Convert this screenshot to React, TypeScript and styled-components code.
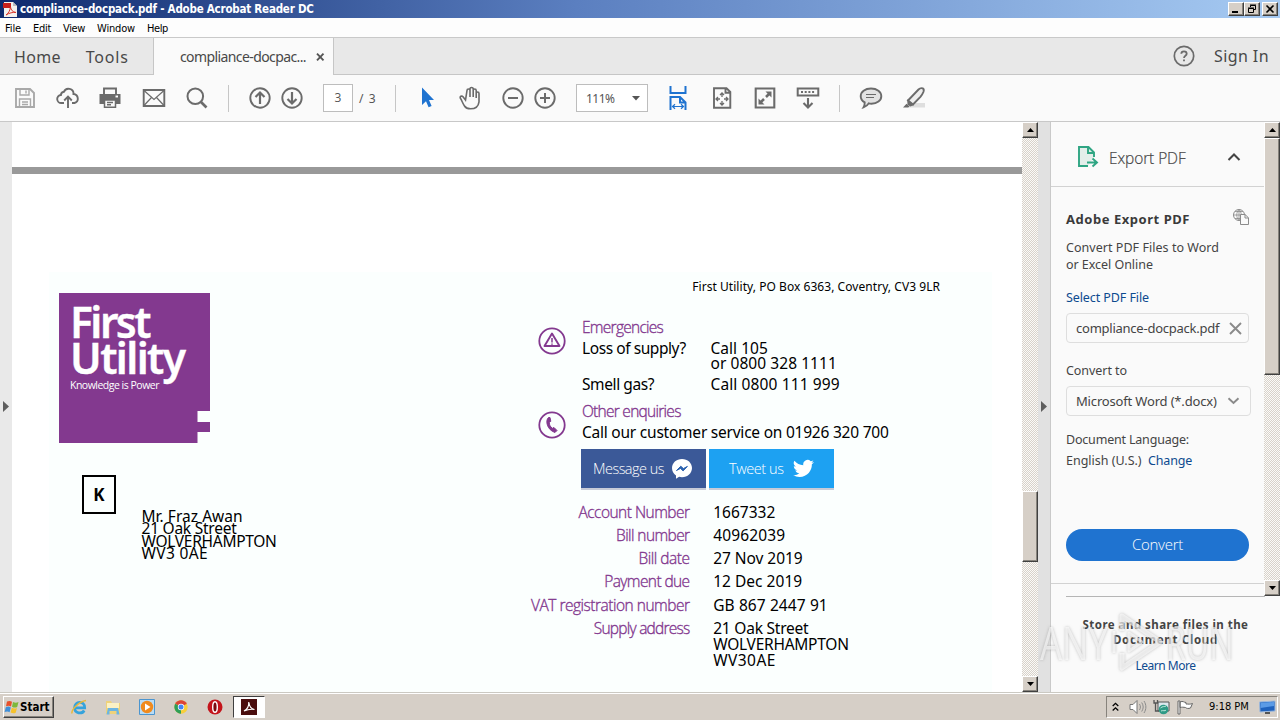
import React from 'react'
import styled, { createGlobalStyle, css } from 'styled-components'

const PURPLE = '#83398f'
const FACE = '#d6cfc7'
const ICON = '#6b6b6b'
const BLUE = '#1f73d0'

type Line = { text: string; track?: number }

const BILL_ROWS: { label: Line; value: Line[] }[] = [
  { label: { text: 'Account Number', track: -0.53 }, value: [{ text: '1667332' }] },
  { label: { text: 'Bill number', track: -0.6 }, value: [{ text: '40962039', track: 0.13 }] },
  { label: { text: 'Bill date', track: -0.48 }, value: [{ text: '27 Nov 2019', track: -0.05 }] },
  { label: { text: 'Payment due', track: -0.6 }, value: [{ text: '12 Dec 2019', track: 0.02 }] },
  { label: { text: 'VAT registration number', track: -0.5 }, value: [{ text: 'GB 867 2447 91', track: 0.1 }] },
  {
    label: { text: 'Supply address', track: -0.76 },
    value: [
      { text: '21 Oak Street', track: -0.22 },
      { text: 'WOLVERHAMPTON', track: -0.25 },
      { text: 'WV30AE', track: 0.45 },
    ],
  },
]

const ADDRESS: Line[] = [
  { text: 'Mr. Fraz Awan', track: 0.04 },
  { text: '21 Oak Street', track: -0.24 },
  { text: 'WOLVERHAMPTON', track: -0.28 },
  { text: 'WV3 0AE', track: 0.35 },
]

const MENUS: Line[] = [
  { text: 'File', track: -0.12 },
  { text: 'Edit', track: -0.29 },
  { text: 'View', track: -0.37 },
  { text: 'Window', track: -0.17 },
  { text: 'Help', track: -0.39 },
]

const GlobalStyle = createGlobalStyle`
  * {
    box-sizing: border-box;
  }
  body {
    margin: 0;
    overflow: hidden;
    font-family: 'Noto Sans', 'Open Sans', sans-serif;
  }
  svg {
    display: block;
    flex: none;
  }
`

const Screen = styled.div`
  width: 1280px;
  height: 720px;
  display: flex;
  flex-direction: column;
  background: #fafafa;
  overflow: hidden;
  white-space: nowrap;
`

const Txt = styled.span<{ $track?: number }>`
  letter-spacing: ${p => p.$track || 0}px;
  white-space: pre;
`

const TitleBar = styled.header`
  height: 18px;
  display: flex;
  align-items: center;
  padding: 0 2px 0 3px;
  background: linear-gradient(90deg, #0f2a6e 0%, #5b7fc0 45%, #a6caf2 100%);
  color: #fff;
  font: 700 11.5px/18px 'DejaVu Sans Condensed', 'DejaVu Sans', sans-serif;
`

const TitleText = styled.div`
  flex: 1;
  padding-left: 2px;
`

const raised = css`
  background: ${FACE};
  border: 1px solid;
  border-color: #fff #404040 #404040 #fff;
  box-shadow: inset -1px -1px 0 #87837c;
`

const WindowButton = styled.div<{ $gap?: number }>`
  ${raised};
  width: 16px;
  height: 14px;
  margin-left: ${p => p.$gap || 0}px;
  display: flex;
  align-items: center;
  justify-content: center;
`

const MenuBar = styled.nav`
  height: 20px;
  display: flex;
  gap: 12px;
  padding-left: 5px;
  background: #fdfdfd;
  border-bottom: 1px solid #c9c9c9;
  font: 11px/21px 'DejaVu Sans Condensed', 'DejaVu Sans', sans-serif;
  color: #000;
`

const TabBar = styled.div`
  height: 37px;
  display: flex;
  align-items: stretch;
  background: #e8e8e8;
  color: #484848;
  font-size: 16px;
  line-height: 38px;
`

const NavTabs = styled.div`
  width: 154px;
  padding-left: 14px;
  display: flex;
  gap: 25px;
  border-right: 1px solid #c6c6c6;
  border-bottom: 1px solid #c6c6c6;
`

const ActiveTab = styled.div`
  width: 179px;
  padding: 0 7px 0 26px;
  display: flex;
  align-items: center;
  justify-content: space-between;
  background: #fafafa;
  font-size: 14px;
`

const Account = styled.div`
  flex: 1;
  padding-right: 11px;
  display: flex;
  align-items: center;
  justify-content: flex-end;
  gap: 19px;
  border-left: 1px solid #c6c6c6;
  border-bottom: 1px solid #c6c6c6;
`

const Toolbar = styled.div`
  height: 47px;
  display: flex;
  align-items: center;
  background: #fafafa;
  border-bottom: 1px solid #c8c8c8;
`

const Tool = styled.div<{ $gap: number }>`
  width: 24px;
  height: 24px;
  margin-left: ${p => p.$gap}px;
`

const Divider = styled.div<{ $gap: number }>`
  width: 1px;
  height: 27px;
  margin-left: ${p => p.$gap}px;
  background: #c6c6c6;
`

const PageInput = styled.div`
  width: 30px;
  height: 28px;
  margin-left: 19px;
  border: 1px solid #bdbdbd;
  background: #fff;
  color: #555;
  font: 12px/26px 'Open Sans', sans-serif;
  text-align: center;
`

const PageCount = styled.div`
  width: 18px;
  margin: 0 18px 0 6px;
  color: #555;
  font-size: 12px;
`

const ZoomSelect = styled.div`
  width: 72px;
  height: 28px;
  margin-left: 19px;
  padding: 0 7px 0 9px;
  display: flex;
  align-items: center;
  justify-content: space-between;
  border: 1px solid #bdbdbd;
  background: #fff;
  color: #555;
  font-size: 12px;
`

const Workspace = styled.main`
  height: 570px;
  display: flex;
`

const Gutter = styled.div<{ $color: string }>`
  width: 12px;
  padding: 0 0 2px 3px;
  display: flex;
  align-items: center;
  background: ${p => p.$color};
`

const Viewer = styled.div`
  width: 1010px;
  display: flex;
  flex-direction: column;
  background: #fff;
`

const PageGap = styled.div`
  height: 7px;
  margin-top: 45px;
  background: #999;
`

const Bill = styled.article`
  flex: 1;
  margin: 98px 30px 0 37px;
  display: flex;
  background: #fbfffe;
  color: #000;
  font-size: 15.5px;
`

const BillLeft = styled.div`
  width: 481px;
  padding: 21px 0 0 10px;
`

const Logo = styled.div`
  width: 151px;
  height: 150px;
  padding: 11px 0 0 11px;
  background: ${PURPLE};
  clip-path: polygon(0 0, 100% 0, 100% 118px, 138.5px 118px, 138.5px 129px, 100% 129px, 100% 139px, 138.5px 139px, 138.5px 100%, 0 100%);
  color: #fff;
`

const LogoName = styled.div`
  font: 600 42.5px/36px 'Noto Sans', sans-serif;
  -webkit-text-stroke: 0.4px #fff;
`

const LogoTag = styled.div`
  padding-top: 2px;
  font: 400 10.5px/14px 'Open Sans', sans-serif;
`

const Addressee = styled.div`
  padding: 32px 0 0 23px;
  display: flex;
  align-items: flex-start;
`

const RouteCode = styled.div`
  width: 34px;
  height: 39px;
  border: 2px solid #000;
  font: 700 17px/35px 'Noto Sans', sans-serif;
  text-align: center;
`

const PostalAddress = styled.div`
  padding: 35px 0 0 25.5px;
  display: flex;
  flex-direction: column;
  line-height: 12.4px;
`

const BillRight = styled.div`
  width: 410px;
`

const SenderLine = styled.div`
  height: 45px;
  font-size: 12px;
  line-height: 29px;
  text-align: right;
`

const Contact = styled.section<{ $bottom: number }>`
  display: flex;
  padding-bottom: ${p => p.$bottom}px;
  line-height: 15px;
`

const ContactIcon = styled.div`
  width: 52px;
  padding: 10px 0 0 8px;
`

const thin = css`
  color: ${PURPLE};
  font-family: 'Open Sans', sans-serif;
  font-weight: 300;
  -webkit-text-stroke: 0.35px ${PURPLE};
`

const ContactTitle = styled.div`
  ${thin};
  height: 24px;
  line-height: 20px;
`

const ContactRow = styled.div`
  display: grid;
  grid-template-columns: 128.5px auto;
  margin-bottom: 6px;
`

const Stack = styled.div`
  display: flex;
  flex-direction: column;
`

const Social = styled.div`
  display: flex;
  gap: 3px;
  padding: 1px 0 16px 51px;
`

const SocialButton = styled.div<{ $color: string; $left: number; $gap: number }>`
  width: 125px;
  height: 39px;
  padding-left: ${p => p.$left}px;
  display: flex;
  align-items: center;
  gap: ${p => p.$gap}px;
  background: ${p => p.$color};
  box-shadow: 0 2px 0 #c7cbd8;
  color: #fff;
  font: 300 14.5px/38px 'Open Sans', sans-serif;
`

const BillRow = styled.div`
  display: grid;
  grid-template-columns: 159.5px auto;
  column-gap: 23.7px;
  margin-bottom: 7px;
  line-height: 16px;
  &:nth-child(5) {
    margin-top: 8px;
  }
`

const BillLabel = styled.div`
  ${thin};
  text-align: right;
`

const ScrollTrack = styled.div`
  width: 16px;
  display: flex;
  flex-direction: column;
  background: repeating-conic-gradient(#d8d2ca 0 25%, #fbfaf8 0 50%) 0 0 / 2px 2px;
`

const ScrollButton = styled.div`
  ${raised};
  height: 16px;
  display: flex;
  align-items: center;
  justify-content: center;
`

const ScrollThumb = styled.div<{ $top: number; $height: number }>`
  ${raised};
  height: ${p => p.$height}px;
  margin: ${p => p.$top}px 0 auto;
`

const Panel = styled.aside`
  width: 230px;
  display: flex;
  flex-direction: column;
  border-left: 1px solid #c9c9c9;
  color: #444;
  font-size: 12.5px;
`

const PanelScroll = styled.div`
  height: 474px;
  display: flex;
`

const PanelBody = styled.div`
  width: 213px;
`

const PanelHead = styled.div`
  height: 65px;
  padding: 6px 23px 0 25px;
  display: flex;
  align-items: center;
  border-bottom: 1px solid #d2d2d2;
  font: 300 15.5px/24px 'Open Sans', sans-serif;
  -webkit-text-stroke: 0.2px #444;
`

const PanelHeadText = styled.div`
  flex: 1;
  padding: 1px 0 0 9px;
`

const PanelContent = styled.div`
  height: 397px;
  padding: 21px 14px 0 15px;
  border-bottom: 1px solid #d2d2d2;
`

const PanelTitle = styled.div`
  display: flex;
  justify-content: space-between;
  font: 700 13px/22px 'Noto Sans', sans-serif;
  color: #3a3a3a;
`

const Blurb = styled.div`
  display: flex;
  flex-direction: column;
  padding-top: 9px;
  line-height: 17px;
`

const Link = styled.a`
  color: #0d4a8f;
`

const FieldCaption = styled.div<{ $top: number }>`
  padding-top: ${p => p.$top}px;
  line-height: 18px;
`

const Field = styled.div<{ $wide?: boolean }>`
  width: ${p => (p.$wide ? 185 : 183)}px;
  height: 30px;
  margin-top: 6px;
  padding: 0 ${p => (p.$wide ? 10 : 6)}px 0 9px;
  display: flex;
  align-items: center;
  justify-content: space-between;
  border: 1px solid #dedede;
  border-radius: 4px;
  font-size: 13px;
`

const ConvertButton = styled.div`
  width: 183px;
  height: 32px;
  margin-top: 59px;
  border-radius: 16px;
  background: ${BLUE};
  color: #fff;
  font: 300 15px/31px 'Open Sans', sans-serif;
  text-align: center;
`

const PanelFooter = styled.div`
  flex: 1;
  display: flex;
  flex-direction: column;
  align-items: center;
  font: 700 11.5px/15px 'Noto Sans', sans-serif;
  color: #444;
`

const FooterRule = styled.div`
  width: 199px;
  height: 1px;
  margin-bottom: 20px;
  background: #b5b5b5;
`

const LearnMore = styled(Link)`
  margin-top: 11px;
  font-size: 12px;
  font-weight: 400;
`

const Watermark = styled.div`
  position: absolute;
  left: 1040px;
  top: 609px;
  display: flex;
  align-items: center;
  color: rgba(255, 255, 255, 0.62);
  font: 400 46px/60px 'Open Sans', sans-serif;
  filter: drop-shadow(0 0 1.5px rgba(100, 100, 100, 0.6));
`

const WatermarkWord = styled.span<{ $width: number; $scale: number }>`
  width: ${p => p.$width}px;
  transform: scaleX(${p => p.$scale});
  transform-origin: left;
`

const Taskbar = styled.footer`
  height: 28px;
  display: flex;
  align-items: center;
  padding: 1px 2px 0 3px;
  background: ${FACE};
  border-top: 1px solid #cbc9c2;
  box-shadow: inset 0 1px 0 #fff;
  color: #000;
`

const StartButton = styled.div`
  ${raised};
  width: 51px;
  height: 22px;
  display: flex;
  align-items: center;
  font: 700 11.5px/18px 'DejaVu Sans Condensed', 'DejaVu Sans', sans-serif;
`

const Launch = styled.div<{ $gap: number }>`
  margin-left: ${p => p.$gap}px;
  width: 18px;
  height: 18px;
`

const RunningApp = styled.div`
  width: 32px;
  height: 22px;
  margin-left: 9px;
  display: flex;
  align-items: center;
  justify-content: center;
  background: #fff;
  border: 1px solid;
  border-color: #404040 #fff #fff #404040;
`

const Tray = styled.div`
  width: 172px;
  height: 22px;
  margin-left: auto;
  padding: 0 2px 0 5px;
  display: flex;
  align-items: center;
  border: 1px solid;
  border-color: #87837c #fff #fff #87837c;
  font: 11px/20px 'DejaVu Sans Condensed', 'DejaVu Sans', sans-serif;
`

const TrayIcon = styled.div<{ $gap: number }>`
  margin-left: ${p => p.$gap}px;
`

const Clock = styled.div`
  width: 42px;
  margin: 0 10px 0 15px;
`

const Arrow = ({ up }: { up?: boolean }) => (
  <svg width="7" height="4" viewBox="0 0 7 4">
    <path d={up ? 'M3.5 0 7 4H0z' : 'M0 0h7L3.5 4z'} fill="#000" />
  </svg>
)

const Handle = () => (
  <svg width="6" height="11" viewBox="0 0 6 11">
    <path d="M0 0 6 5.5 0 11z" fill="#5e5e5e" />
  </svg>
)

const Glyph = ({ children, color = ICON }: { children: React.ReactNode; color?: string }) => (
  <svg width="24" height="24" viewBox="0 0 24 24" fill="none" stroke={color} strokeWidth="1.9">
    {children}
  </svg>
)

const Scrollbar = ({ top, height }: { top: number; height: number }) => (
  <ScrollTrack>
    <ScrollButton>
      <Arrow up />
    </ScrollButton>
    <ScrollThumb $top={top} $height={height} />
    <ScrollButton>
      <Arrow />
    </ScrollButton>
  </ScrollTrack>
)

const Tools = () => (
  <Toolbar>
    <Tool $gap={13}>
      <Glyph color="#a9a9a9">
        <path d="M3 3h14l4 4v14H3z" />
        <path d="M7 3v6h9V3M13 4.500v3M6.500 21v-8h11v8M9 16h6M9 18.500h6" strokeWidth="1.400" />
      </Glyph>
    </Tool>
    <Tool $gap={19}>
      <Glyph>
        <path d="M8 17H5.500a4 4 0 0 1-.6-8 3.500 3.500 0 0 1 3-3.200A5 5 0 0 1 17.500 8a4.600 4.600 0 0 1 1 9H16M12 22V11M8.200 14.500 12 10.700l3.800 3.800" />
      </Glyph>
    </Tool>
    <Tool $gap={18}>
      <Glyph>
        <path d="M6 8V2.500h12V8" />
        <path d="M1.500 8h21v10H18v-4H6v4H1.500z" fill={ICON} stroke="none" />
        <path d="M6.500 14h11v7.200h-11zM9 16.500h6M9 18.800h4" strokeWidth="1.500" />
        <path d="M17.500 10.500h2.500" stroke="#fff" />
      </Glyph>
    </Tool>
    <Tool $gap={20}>
      <Glyph>
        <path d="M1.700 4h20.600v16H1.700z" />
        <path d="m2 4.500 10 9 10-9M2 19.500l7.500-8M22 19.500l-7.500-8" strokeWidth="1.200" />
      </Glyph>
    </Tool>
    <Tool $gap={19}>
      <Glyph>
        <circle cx="10.300" cy="10.300" r="7.800" strokeWidth="2" />
        <path d="m16 16 5.500 5.500" strokeWidth="2.600" />
      </Glyph>
    </Tool>
    <Divider $gap={19} />
    <Tool $gap={19}>
      <Glyph>
        <circle cx="12" cy="12" r="9.700" />
        <path d="M12 18V7M7.500 11 12 6.500l4.500 4.500" strokeWidth="2.200" />
      </Glyph>
    </Tool>
    <Tool $gap={8}>
      <Glyph>
        <circle cx="12" cy="12" r="9.700" />
        <path d="M12 6v11M7.500 13l4.500 4.500 4.500-4.500" strokeWidth="2.200" />
      </Glyph>
    </Tool>
    <PageInput>3</PageInput>
    <PageCount>
      <Txt $track={1.1}>/ 3</Txt>
    </PageCount>
    <Divider $gap={0} />
    <Tool $gap={20}>
      <Glyph>
        <path d="M6 1.500v17.500l4-3.800 2.600 6.100 3-1.300-2.600-6H18z" fill={BLUE} stroke="none" />
      </Glyph>
    </Tool>
    <Tool $gap={18}>
      <Glyph>
        <path
          d="M7.500 14 5 10.800c-1.200-1.400-3.600-.4-2.600 1.500C4 14.700 4.500 17 6.500 20c1 1.600 3 2.800 6 2.800 5 0 8-3 8.500-7V7.500c0-2-2.800-2-2.800 0V12 4.500c0-2-3-2-3 0V11 3c0-2-3.200-2-3.200 0V11 4.500c0-2-3-2-3 0z"
          strokeWidth="1.600"
        />
      </Glyph>
    </Tool>
    <Tool $gap={19}>
      <Glyph>
        <circle cx="12" cy="12" r="9.700" />
        <path d="M7 12h10" strokeWidth="2" />
      </Glyph>
    </Tool>
    <Tool $gap={8}>
      <Glyph>
        <circle cx="12" cy="12" r="9.700" />
        <path d="M7 12h10M12 7v10" strokeWidth="2" />
      </Glyph>
    </Tool>
    <ZoomSelect>
      <Txt $track={-0.55}>111%</Txt>
      <svg width="8" height="5" viewBox="0 0 8 5">
        <path d="M0 0h8L4 4.500z" fill="#555" />
      </svg>
    </ZoomSelect>
    <Tool $gap={18}>
      <Glyph color={BLUE}>
        <path d="M4.500 0v7h15V0M4.500 24V11h9.500l5.500 5.500V24M14 11v5.500h5" strokeWidth="2" />
        <path d="M7 20.500h10M9 18.200l-2.500 2.300L9 22.800M15 18.200l2.500 2.300-2.500 2.300" strokeWidth="1.200" />
      </Glyph>
    </Tool>
    <Tool $gap={20}>
      <Glyph>
        <path d="M4 2.300h12.500L20.300 6v15.700H4zM15.500 2.500v4.300h4.500" strokeWidth="1.900" />
        <path d="M12 7.500v3.500M12 15v3.500M6.500 13h3.500M14 13h3.500M10 9l2-2 2 2M10 17l2 2 2-2M8 11l-2 2 2 2M16 11l2 2-2 2" strokeWidth="1.300" />
      </Glyph>
    </Tool>
    <Tool $gap={19}>
      <Glyph>
        <path d="M2.700 2.500h18.600v19H2.700z" strokeWidth="2.100" />
        <path d="M12.500 5.500h6v6zM5.500 12.500v6h6z" fill={ICON} stroke="none" />
        <path d="m13 11 4-4M7 17l4-4" strokeWidth="2.500" />
      </Glyph>
    </Tool>
    <Tool $gap={19}>
      <Glyph>
        <path d="M1.700 2.500h20.600v7H1.700z" strokeWidth="2" />
        <path d="M5 6h14" strokeDasharray="2 1.700" />
        <path d="M12 12v9M7.500 17l4.500 4.500 4.500-4.500" strokeWidth="2.100" />
      </Glyph>
    </Tool>
    <Divider $gap={19} />
    <Tool $gap={19}>
      <Glyph>
        <path d="M12 2.500c6 0 10.300 3.300 10.300 7.700S18 17.700 12.500 17.700c-1 0-2-.1-2.800-.3-1 1.800-2.600 3.200-5.200 4 .9-1.500 1.300-3 1.200-5C3.200 15 1.700 12.800 1.700 10.200 1.700 5.800 6 2.500 12 2.500z" fill="#e3e3e3" />
        <path d="M7 8.500h10M7 11.500h8" strokeWidth="1.200" />
      </Glyph>
    </Tool>
    <Tool $gap={19}>
      <Glyph>
        <path d="M9 17h14v4.500H7z" fill="#dedede" stroke="none" />
        <path d="m6 14.500 10.500-11c1.500-1.500 3-1.600 4.300-1.200.9.500 1.200 2 .6 3.700-.5 1.300-1.500 3-3 4.800L11 18.500z" fill="#eee" />
        <path d="m5.200 13.200 7 5.800-4 1.500L5.500 18.500zM1 21.600l3.500-3.800 3 2.600-1.200 1.200z" fill={ICON} stroke="none" />
      </Glyph>
    </Tool>
  </Toolbar>
)

const Lines = ({ lines }: { lines: Line[] }) => (
  <>
    {lines.map(({ text, track }) => (
      <div key={text}>
        <Txt $track={track}>{text}</Txt>
      </div>
    ))}
  </>
)

const BillPage = () => (
  <Bill>
    <BillLeft>
      <Logo>
        <LogoName>
          <Txt $track={-2.5}>First</Txt>
          <br />
          <Txt $track={-1.6}>Utility</Txt>
        </LogoName>
        <LogoTag>
          <Txt $track={-0.5}>Knowledge is Power</Txt>
        </LogoTag>
      </Logo>
      <Addressee>
        <RouteCode>K</RouteCode>
        <PostalAddress>
          <Lines lines={ADDRESS} />
        </PostalAddress>
      </Addressee>
    </BillLeft>
    <BillRight>
      <SenderLine>
        <Txt $track={0.05}>First Utility, PO Box 6363, Coventry, CV3 9LR</Txt>
      </SenderLine>
      <Contact $bottom={3}>
        <ContactIcon>
          <svg width="28" height="28" viewBox="0 0 28 28" fill="none" stroke={PURPLE}>
            <circle cx="14" cy="14" r="12.700" strokeWidth="1.800" />
            <path d="M14 6.500 21.500 19h-15z" strokeWidth="1.900" strokeLinejoin="round" />
            <path d="M14 11v4.500M14 16.500v1.300" strokeWidth="1.500" />
          </svg>
        </ContactIcon>
        <div>
          <ContactTitle>
            <Txt $track={-0.73}>Emergencies</Txt>
          </ContactTitle>
          <ContactRow>
            <div>
              <Txt $track={-0.43}>Loss of supply?</Txt>
            </div>
            <Stack>
              <Lines lines={[{ text: 'Call 105', track: 0.03 }, { text: 'or 0800 328 1111', track: 0.06 }]} />
            </Stack>
          </ContactRow>
          <ContactRow>
            <div>
              <Txt $track={-0.4}>Smell gas?</Txt>
            </div>
            <div>
              <Txt $track={0.12}>Call 0800 111 999</Txt>
            </div>
          </ContactRow>
        </div>
      </Contact>
      <Contact $bottom={2}>
        <ContactIcon>
          <svg width="28" height="28" viewBox="0 0 28 28" fill="none" stroke={PURPLE}>
            <circle cx="14" cy="14" r="12.700" strokeWidth="1.800" />
            <path d="M10.500 6.500c-3.500 3-1.500 12.500 6.500 15l2-2-3-3-1.700.8c-2-1.500-3-3.500-3-5.800l1.500-1.200-.8-3.800z" fill={PURPLE} strokeWidth="1" />
          </svg>
        </ContactIcon>
        <div>
          <ContactTitle>
            <Txt $track={-0.73}>Other enquiries</Txt>
          </ContactTitle>
          <ContactRow>
            <div>
              <Txt $track={-0.23}>Call our customer service on 01926 320 700</Txt>
            </div>
          </ContactRow>
        </div>
      </Contact>
      <Social>
        <SocialButton $color="#3b5998" $left={12} $gap={7.5}>
          <Txt $track={-0.53}>Message us</Txt>
          <svg width="22" height="22" viewBox="0 0 22 22">
            <path d="M11 1c5.600 0 10 3.900 10 9s-4.400 9.200-10 9.200c-1 0-2-.2-2.900-.4L5 20.800v-3.300C2.500 15.800 1 13.200 1 10c0-5.100 4.400-9 10-9z" fill="#fff" />
            <path d="m5.500 12.500 4.300-4.300 2.600 2.400 4-2.200-4.300 4.500-2.600-2.500z" fill="#2b62b0" stroke="#2b62b0" />
          </svg>
        </SocialButton>
        <SocialButton $color="#1da1f2" $left={20} $gap={9}>
          <Txt $track={-0.42}>Tweet us</Txt>
          <svg width="21" height="21" viewBox="0 0 24 24" fill="#fff">
            <path d="M23.950 4.570a10 10 0 0 1-2.820.770 4.960 4.960 0 0 0 2.160-2.720 9.900 9.900 0 0 1-3.120 1.180 4.920 4.920 0 0 0-8.380 4.480C7.690 8.090 4.070 6.130 1.640 3.160a4.920 4.920 0 0 0 1.520 6.570 4.900 4.900 0 0 1-2.230-.610v.060a4.920 4.920 0 0 0 3.950 4.830 5 5 0 0 1-2.210.080 4.940 4.940 0 0 0 4.600 3.420A9.870 9.870 0 0 1 0 19.540a14 14 0 0 0 7.550 2.210c9.050 0 14-7.500 14-13.980 0-.210 0-.420-.020-.630a10 10 0 0 0 2.460-2.550z" />
          </svg>
        </SocialButton>
      </Social>
      <div>
        {BILL_ROWS.map(({ label, value }) => (
          <BillRow key={label.text}>
            <BillLabel>
              <Txt $track={label.track}>{label.text}</Txt>
            </BillLabel>
            <Stack>
              <Lines lines={value} />
            </Stack>
          </BillRow>
        ))}
      </div>
    </BillRight>
  </Bill>
)

const ExportPanel = () => (
  <Panel>
    <PanelScroll>
      <PanelBody>
        <PanelHead>
          <svg width="24" height="24" viewBox="0 0 24 24" fill="none" stroke="#2fa583" strokeWidth="1.900">
            <path d="M12 21H3V2h9.500L18 7.500V12" fill="#e3eeea" />
            <path d="M12 2v6h6M11 17.500h9M16.500 13.500l4.500 4-4.500 4" />
          </svg>
          <PanelHeadText>
            <Txt $track={-0.1}>Export PDF</Txt>
          </PanelHeadText>
          <svg width="14" height="10" viewBox="0 0 14 10">
            <path d="m1.500 8 5.500-5.500L12.500 8" fill="none" stroke="#444" strokeWidth="2" />
          </svg>
        </PanelHead>
        <PanelContent>
          <PanelTitle>
            <Txt $track={0.54}>Adobe Export PDF</Txt>
            <svg width="18" height="18" viewBox="0 0 18 18" fill="none" stroke="#8b8b8b">
              <circle cx="7" cy="7" r="5.500" />
              <path d="M1.500 7h11M7 1.500v11M3 3.500h8M3 10.500h6M7 1.500c-3 3-3 8 0 11M7 1.500c3 3 3 8 0 11" strokeWidth=".8" />
              <path d="M8.500 6.500H13l3.500 3.300v6.700h-8zM13 6.500V10h3.500" fill="#fafafa" />
            </svg>
          </PanelTitle>
          <Blurb>
            <Lines lines={[{ text: 'Convert PDF Files to Word', track: 0.04 }, { text: 'or Excel Online', track: -0.04 }]} />
          </Blurb>
          <FieldCaption $top={16}>
            <Link>
              <Txt $track={-0.09}>Select PDF File</Txt>
            </Link>
          </FieldCaption>
          <Field>
            <Txt $track={-0.24}>compliance-docpack.pdf</Txt>
            <svg width="13" height="13" viewBox="0 0 13 13">
              <path d="m1 1 11 11M12 1 1 12" stroke="#8a8a8a" strokeWidth="1.900" />
            </svg>
          </Field>
          <FieldCaption $top={19}>
            <Txt $track={-0.06}>Convert to</Txt>
          </FieldCaption>
          <Field $wide>
            <Txt $track={-0.17}>Microsoft Word (*.docx)</Txt>
            <svg width="13" height="8" viewBox="0 0 13 8">
              <path d="m1.500 1.200 5 4.800 5-4.800" fill="none" stroke="#8a8a8a" strokeWidth="1.900" />
            </svg>
          </Field>
          <FieldCaption $top={15}>
            <Txt $track={-0.19}>Document Language:</Txt>
          </FieldCaption>
          <FieldCaption $top={3}>
            <Txt $track={-0.01}>English (U.S.)  </Txt>
            <Link>
              <Txt $track={-0.18}>Change</Txt>
            </Link>
          </FieldCaption>
          <ConvertButton>
            <Txt $track={-0.28}>Convert</Txt>
          </ConvertButton>
        </PanelContent>
      </PanelBody>
      <Scrollbar top={0} height={237} />
    </PanelScroll>
    <PanelFooter>
      <FooterRule />
      <Txt $track={0.46}>Store and share files in the</Txt>
      <Txt $track={0.69}>Document Cloud</Txt>
      <LearnMore>
        <Txt $track={-0.49}>Learn More</Txt>
      </LearnMore>
    </PanelFooter>
  </Panel>
)

export default function App() {
  return (
    <Screen>
      <GlobalStyle />
      <TitleBar>
        <svg width="15" height="15" viewBox="0 0 15 15">
          <path d="M1 0h9l4 4v11H1z" fill="#f4f1ee" />
          <path d="M10 0v4h4z" fill="#bbb" />
          <path d="M0 1h8v5H0z" fill="#c8201c" />
          <path d="M3 13c3-2 4-5 4.500-8 .5 3 2 5 5.500 5.500-3-.5-7 .5-10 2.500z" fill="none" stroke="#d8362a" />
        </svg>
        <TitleText>
          <Txt $track={-0.22}>compliance-docpack.pdf - Adobe Acrobat Reader DC</Txt>
        </TitleText>
        <WindowButton>
          <svg width="10" height="10" viewBox="0 0 10 10">
            <path d="M1 7h6v2H1z" />
          </svg>
        </WindowButton>
        <WindowButton>
          <svg width="10" height="10" viewBox="0 0 10 10" fill="none" stroke="#000">
            <path d="M3.500 3V1.500h5v4H7M3 1h6M1.500 4.500h5v4h-5zM1 4h6" />
          </svg>
        </WindowButton>
        <WindowButton $gap={2}>
          <svg width="10" height="10" viewBox="0 0 10 10">
            <path d="m1.500 1.500 7 7m0-7-7 7" stroke="#000" strokeWidth="1.600" />
          </svg>
        </WindowButton>
      </TitleBar>
      <MenuBar>
        {MENUS.map(({ text, track }) => (
          <Txt key={text} $track={track}>
            {text}
          </Txt>
        ))}
      </MenuBar>
      <TabBar>
        <NavTabs>
          <Txt $track={0.3}>Home</Txt>
          <Txt $track={0.8}>Tools</Txt>
        </NavTabs>
        <ActiveTab>
          <Txt $track={-0.6}>compliance-docpac...</Txt>
          <svg width="12" height="8" viewBox="0 0 12 8">
            <path d="m3 .7 6.500 6.600M9.500.7 3 7.300" stroke="#555" strokeWidth="1.900" />
          </svg>
        </ActiveTab>
        <Account>
          <svg width="22" height="22" viewBox="0 0 22 22" fill="none" stroke={ICON} strokeWidth="1.700">
            <circle cx="11" cy="11" r="9.700" />
            <path d="M8.300 8.800c0-3.300 5.400-3.300 5.400 0 0 2-2.700 2-2.700 4.200M11 14.500v1.800" strokeWidth="1.800" />
          </svg>
          <Txt $track={0.41}>Sign In</Txt>
        </Account>
      </TabBar>
      <Tools />
      <Workspace>
        <Gutter $color="#e9e9e9">
          <Handle />
        </Gutter>
        <Viewer>
          <PageGap />
          <BillPage />
        </Viewer>
        <Scrollbar top={353} height={71} />
        <Gutter $color="#e1e1e1">
          <Handle />
        </Gutter>
        <ExportPanel />
      </Workspace>
      <Taskbar>
        <StartButton>
          <svg width="16" height="16" viewBox="0 0 16 16">
            <path d="M3 2.500c2-1 3.500-.7 5 .2L7 7.500c-1.500-1-3-1-5-.2z" fill="#e8502a" />
            <path d="M9 3c2 1 3.500 1 5.500 0l-1.300 5c-2 1-3.500.7-5.200-.3z" fill="#7db83a" />
            <path d="M1.800 8.200c2-.8 3.300-.8 5 .2l-1.200 4.800c-1.500-1-3-1-5-.2z" fill="#3f8fd8" />
            <path d="M7.800 8.800c2 1 3.300 1 5.200.2l-1.300 4.700c-2 1-3.300.7-5.100-.2z" fill="#f6c22c" />
          </svg>
          <Txt $track={0}>Start</Txt>
        </StartButton>
        <Launch $gap={16}>
          <svg width="18" height="18" viewBox="0 0 18 18" fill="none">
            <path d="M4.500 9.800h10.200c0-7.600-10.400-7-10.200.2.100 5.500 7.500 6.500 9.700 2.500" stroke="#35a3dc" strokeWidth="2.700" />
            <path d="M2 15.500C1 12 9 3.500 16 2.500" stroke="#e9b93a" strokeWidth="1.500" />
          </svg>
        </Launch>
        <Launch $gap={16}>
          <svg width="18" height="18" viewBox="0 0 18 18">
            <path d="M2 3h5l1 2h8v11H2z" fill="#eed27a" />
            <path d="M3 5h12v5H3z" fill="#fbf1c4" />
            <path d="M4 10h10l1.500 6.500h-3V13h-7v3.500h-3z" fill="#6cb5e2" />
          </svg>
        </Launch>
        <Launch $gap={16}>
          <svg width="18" height="18" viewBox="0 0 18 18">
            <path d="M1.500 1.500h15v15h-15z" fill="#b9dcf5" stroke="#4b95cf" />
            <circle cx="9" cy="9" r="6.200" fill="#f08a1d" />
            <path d="M7 5.500 12.500 9 7 12.500z" fill="#fff" />
          </svg>
        </Launch>
        <Launch $gap={16}>
          <svg width="18" height="18" viewBox="0 0 18 18">
            <circle cx="9" cy="9" r="6.700" fill="#f7cf3b" />
            <path d="M9 9 3.200 5.700A6.700 6.700 0 0 1 14.800 5.700z" fill="#db4437" />
            <path d="M9 9 3.200 5.700A6.700 6.700 0 0 0 9 15.700z" fill="#2e9e58" />
            <circle cx="9" cy="9" r="3.200" fill="#fff" />
            <circle cx="9" cy="9" r="2.500" fill="#4285f4" />
          </svg>
        </Launch>
        <Launch $gap={16}>
          <svg width="18" height="18" viewBox="0 0 18 18">
            <circle cx="9" cy="9" r="7.500" fill="#c4141b" />
            <ellipse cx="9" cy="9" rx="2.300" ry="5.300" fill="#7c0a0e" stroke="#fff" strokeWidth="1.400" />
          </svg>
        </Launch>
        <RunningApp>
          <svg width="16" height="16" viewBox="0 0 16 16">
            <path d="M0 0h16v16H0z" fill="#4a0d0d" />
            <path d="M3 12c3-1.500 5-5 4.800-9 .5 4.500 2.500 7 5.700 7.500-3.500-.7-7 0-10.500 1.500z" fill="none" stroke="#fff" strokeWidth="1.200" />
          </svg>
        </RunningApp>
        <Tray>
          <svg width="7" height="10" viewBox="0 0 7 10" fill="none" stroke="#000" strokeWidth="1.300">
            <path d="m.7 4 2.800-2.700L6.300 4M.7 8.500l2.800-2.700 2.800 2.700" />
          </svg>
          <TrayIcon $gap={10}>
            <svg width="18" height="16" viewBox="0 0 18 16" fill="none" stroke="#8b8b8b">
              <path d="M1 5.500h3l4-4v13l-4-4H1z" fill="#fff" stroke="#777" />
              <path d="M10.500 5c1.200 2 1.200 4 0 6M12.700 3.500c2 3 2 6 0 9M15 2c2.500 4 2.500 8 0 12" />
            </svg>
          </TrayIcon>
          <TrayIcon $gap={6}>
            <svg width="17" height="16" viewBox="0 0 17 16">
              <path d="M5 3h11v9H5z" fill="#dce8ee" stroke="#555" />
              <path d="M1 1v3h1.500v8H6M4.500 1v3H3" fill="none" stroke="#555" strokeWidth="1.300" />
              <circle cx="10.500" cy="10.500" r="4.800" fill="#2f9a86" />
              <path d="M7.500 9c2-2 4-1 5.500-2M8 12c2-1 4 .5 5-1" stroke="#bfe9dc" fill="none" />
            </svg>
          </TrayIcon>
          <TrayIcon $gap={7}>
            <svg width="17" height="15" viewBox="0 0 17 15" fill="#fff" stroke="#666">
              <path d="M1 1h2v13H1zM3 2c3-1.500 4 .5 6 .5V4c2.500 0 4 .5 6.500-.5L13.500 8c-2 .8-4 .5-5-.5-2-.3-3.500-.5-5.500 0z" />
            </svg>
          </TrayIcon>
          <Clock>
            <Txt>9:18 PM</Txt>
          </Clock>
          <svg width="17" height="15" viewBox="0 0 17 15">
            <path d="M.5 2 16 1v10L1 12z" fill="#1f62bd" stroke="#9db9dc" />
            <path d="M1.500 2.700 15 2v4L1.500 8z" fill="#5b9be6" />
            <path d="M6 12h5v2H6z" fill="#555" />
          </svg>
        </Tray>
      </Taskbar>
      <Watermark>
        <WatermarkWord $width={66} $scale={0.76}>
          ANY
        </WatermarkWord>
        <svg width="60" height="66" viewBox="0 0 60 66" fill="none" stroke="rgba(255,255,255,.62)" strokeWidth="5" strokeLinejoin="round">
          <path d="M16 22V7l38 26-38 26V44" />
          <path d="M8 22v22M23 24v18l13-9z" strokeWidth="3" />
        </svg>
        <WatermarkWord $width={68} $scale={0.7}>
          RUN
        </WatermarkWord>
      </Watermark>
    </Screen>
  )
}
